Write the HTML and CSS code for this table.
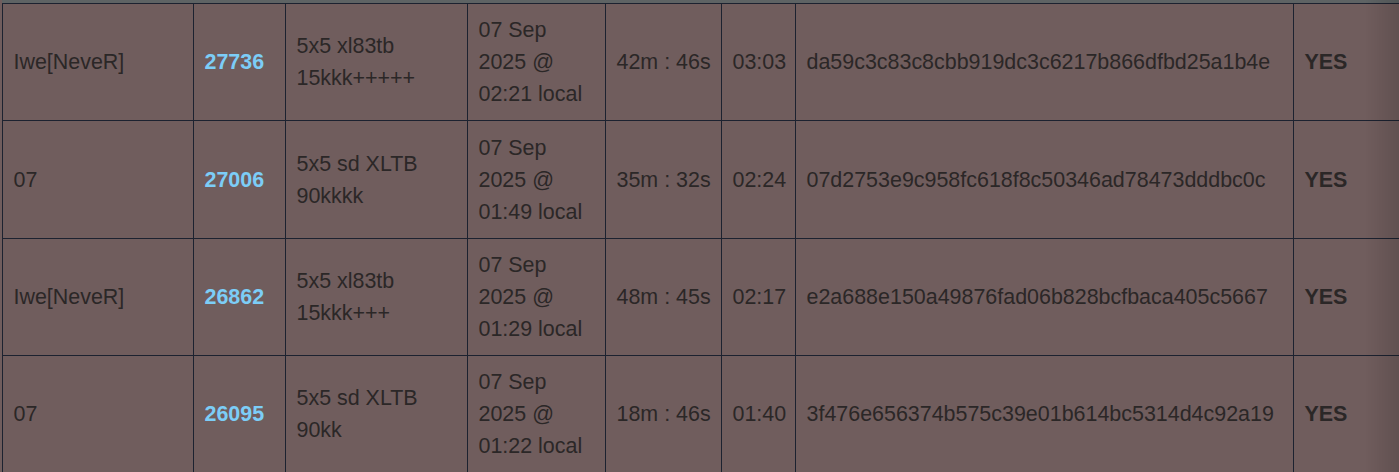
FILE: index.html
```html
<!DOCTYPE html>
<html>
<head>
<meta charset="utf-8">
<link rel="stylesheet" href="styles.css">
</head>
<body>
<div class="wrap">
  <div class="head-strip"></div>
  <table class="runs">
    <colgroup>
      <col class="c-user"><col class="c-id"><col class="c-map"><col class="c-date"><col class="c-dur"><col class="c-len"><col class="c-hash"><col class="c-ok">
    </colgroup>
    <tbody>
      <tr>
        <td>Iwe[NeveR]</td>
        <td class="id">27736</td>
        <td>5x5 xl83tb 15kkk+++++</td>
        <td>07 Sep 2025 @ 02:21 local</td>
        <td class="dur">42m : 46s</td>
        <td>03:03</td>
        <td>da59c3c83c8cbb919dc3c6217b866dfbd25a1b4e</td>
        <td class="ok">YES</td>
      </tr>
      <tr>
        <td>07</td>
        <td class="id">27006</td>
        <td>5x5 sd XLTB 90kkkk</td>
        <td>07 Sep 2025 @ 01:49 local</td>
        <td class="dur">35m : 32s</td>
        <td>02:24</td>
        <td>07d2753e9c958fc618f8c50346ad78473dddbc0c</td>
        <td class="ok">YES</td>
      </tr>
      <tr>
        <td>Iwe[NeveR]</td>
        <td class="id">26862</td>
        <td>5x5 xl83tb 15kkk+++</td>
        <td>07 Sep 2025 @ 01:29 local</td>
        <td class="dur">48m : 45s</td>
        <td>02:17</td>
        <td>e2a688e150a49876fad06b828bcfbaca405c5667</td>
        <td class="ok">YES</td>
      </tr>
      <tr>
        <td>07</td>
        <td class="id">26095</td>
        <td>5x5 sd XLTB 90kk</td>
        <td>07 Sep 2025 @ 01:22 local</td>
        <td class="dur">18m : 46s</td>
        <td>01:40</td>
        <td>3f476e656374b575c39e01b614bc5314d4c92a19</td>
        <td class="ok">YES</td>
      </tr>
    </tbody>
  </table>
</div>
<div class="edge-shade"></div>
</body>
</html>
```

FILE: styles.css
```css
html, body {
  margin: 0;
  padding: 0;
  background: #705d5d;
  overflow: hidden;
  width: 1399px;
  height: 472px;
}
.wrap {
  padding-left: 2px;
  width: 1500px;
}
.head-strip {
  height: 3px;
  background: #5e6364;
}
.runs {
  border-collapse: collapse;
  table-layout: fixed;
  width: 1452px;
  font-family: "Liberation Sans", Arial, sans-serif;
  font-size: 21.45px;
  line-height: 32px;
  color: #2b2727;
}
.c-user { width: 191px; }
.c-id { width: 92px; }
.c-map { width: 182px; }
.c-date { width: 138px; }
.c-dur { width: 116px; }
.c-len { width: 74px; }
.c-hash { width: 498px; }
.c-ok { width: 161px; }
.runs td {
  border: 1px solid #1c2230;
  padding: 10.2px 10.5px;
  height: 96px;
  vertical-align: middle;
  text-align: left;
}
.runs td.dur {
  white-space: nowrap;
}
.runs td.id {
  color: #7ccdf7;
  font-weight: bold;
}
.runs td.ok {
  font-weight: bold;
}
.edge-shade {
  position: fixed;
  top: 0;
  right: 0;
  width: 34px;
  height: 100%;
  background: linear-gradient(to right, rgba(0,0,0,0), rgba(0,0,0,0.13));
  pointer-events: none;
}
```
